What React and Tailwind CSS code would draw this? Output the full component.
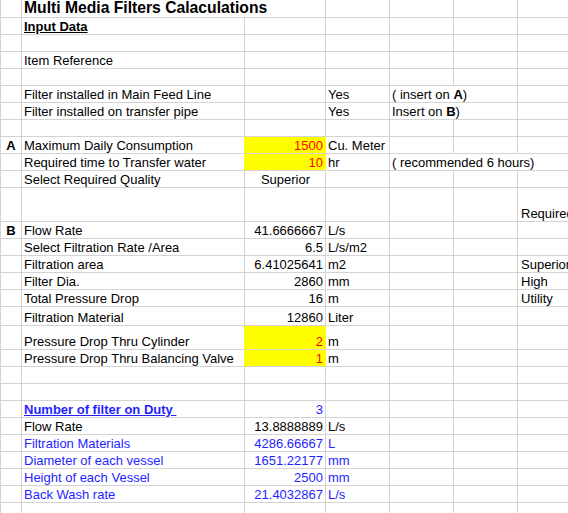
import React from "react";
import clsx from "clsx";

// column widths incl. right gridline
const A = "w-[21px]";
const B = "w-[223px]";
const C = "w-[81px]";
const D = "w-[64px]";
const E = "w-[64px]";
const BC = "w-[304px]";
const EF = "w-[128px]";
const EFG = "w-[192px]";

const Cell = ({ w, className, children, yellow }) => (
  <div
    className={clsx(
      "flex shrink-0 items-end whitespace-nowrap border-r border-b",
      yellow ? "bg-[#ffff00] border-r-[#ffff00] border-b-[#d4d4d4]" : "border-[#d4d4d4]",
      w,
      className
    )}
  >
    {children}
  </div>
);

const Row = ({ h, children }) => <div className={clsx("flex", h)}>{children}</div>;

const Label = ({ children, className }) => (
  <span className={clsx("pl-[2px]", className)}>{children}</span>
);

const Val = ({ children, className }) => (
  <span className={clsx("w-full pr-[2px] text-right", className)}>{children}</span>
);

// plain row: label, value, unit, and optional right-hand stuff
const DataRow = ({ tag, label, value, unit, g, labelCls, valCls, unitCls, yellow, h = "h-[17px]", yellowLeft }) => (
  <Row h={h}>
    <Cell w={A} className="justify-center font-bold">
      {tag}
    </Cell>
    <Cell w={B} className={yellowLeft ? "border-r-[#ffff00]" : ""}>
      <Label className={labelCls}>{label}</Label>
    </Cell>
    <Cell w={C} yellow={yellow}>
      <Val className={clsx(yellow && "text-[#ff0000]", valCls)}>{value}</Val>
    </Cell>
    <Cell w={D}>
      <Label className={clsx("pl-[2px]", unitCls)}>{unit}</Label>
    </Cell>
    <Cell w={E} />
    <Cell w={E} />
    <Cell w={E}>
      <Label className="pl-[3px]">{g}</Label>
    </Cell>
  </Row>
);

const Empty = ({ h = "h-[17px]", g }) => (
  <Row h={h}>
    <Cell w={A} />
    <Cell w={B} />
    <Cell w={C} />
    <Cell w={D} />
    <Cell w={E} />
    <Cell w={E} />
    <Cell w={E}>
      <Label className="pl-[3px]">{g}</Label>
    </Cell>
  </Row>
);

const blue = "text-[#1f1fff]";

export default function App() {
  return (
    <div className="h-[513px] w-[568px] overflow-hidden bg-white font-['Liberation_Sans',Arial,sans-serif] text-[13px] leading-[15px] text-black">
      <div className="border-l border-[#d4d4d4]">
        <Row h="h-[18px]">
          <Cell w={A} />
          <Cell w={BC}>
            <span className="pl-[2px] text-[15.7px] font-bold leading-[18px]">Multi Media Filters Calaculations</span>
          </Cell>
          <Cell w={D} />
          <Cell w={E} />
          <Cell w={E} />
          <Cell w={E} />
        </Row>
        <Row h="h-[17px]">
          <Cell w={A} />
          <Cell w={B}>
            <Label className="font-bold underline">Input Data</Label>
          </Cell>
          <Cell w={C} />
          <Cell w={D} />
          <Cell w={E} />
          <Cell w={E} />
          <Cell w={E} />
        </Row>
        <Empty />
        <DataRow label="Item Reference" />
        <Empty />
        <Row h="h-[17px]">
          <Cell w={A} />
          <Cell w={B}>
            <Label>Filter installed in Main Feed Line</Label>
          </Cell>
          <Cell w={C} />
          <Cell w={D}>
            <Label>Yes</Label>
          </Cell>
          <Cell w={EF}>
            <Label>
              ( insert on <b>A</b>)
            </Label>
          </Cell>
          <Cell w={E} />
        </Row>
        <Row h="h-[17px]">
          <Cell w={A} />
          <Cell w={B}>
            <Label>Filter installed on transfer pipe</Label>
          </Cell>
          <Cell w={C} />
          <Cell w={D}>
            <Label>Yes</Label>
          </Cell>
          <Cell w={EF}>
            <Label>
              Insert on <b>B</b>)
            </Label>
          </Cell>
          <Cell w={E} />
        </Row>
        <Empty />
        <DataRow tag="A" label="Maximum Daily Consumption" value="1500" unit="Cu. Meter" yellow yellowLeft />
        <Row h="h-[17px]">
          <Cell w={A} />
          <Cell w={B} className="border-r-[#ffff00]">
            <Label>Required time to Transfer water</Label>
          </Cell>
          <Cell w={C} yellow>
            <Val className="text-[#ff0000]">10</Val>
          </Cell>
          <Cell w={D}>
            <Label>hr</Label>
          </Cell>
          <Cell w={EFG}>
            <Label>( recommended 6 hours)</Label>
          </Cell>
        </Row>
        <Row h="h-[17px]">
          <Cell w={A} />
          <Cell w={B}>
            <Label>Select Required Quality</Label>
          </Cell>
          <Cell w={C} className="justify-center">
            <span className="pl-[1px]">Superior</span>
          </Cell>
          <Cell w={D} />
          <Cell w={E} />
          <Cell w={E} />
          <Cell w={E} />
        </Row>
        <Empty h="h-[34px]" g="Required Quality" />
        <DataRow tag="B" label="Flow Rate" value="41.6666667" unit="L/s" />
        <DataRow label="Select Filtration Rate /Area" value="6.5" unit="L/s/m2" />
        <DataRow label="Filtration area" value="6.41025641" unit="m2" g="Superior" />
        <DataRow label="Filter Dia." value="2860" unit="mm" g="High" />
        <DataRow label="Total Pressure Drop" value="16" unit="m" g="Utility" />
        <DataRow h="h-[19px]" label="Filtration Material" value="12860" unit="Liter" />
        <DataRow h="h-[24px]" label="Pressure Drop Thru Cylinder" value="2" unit="m" yellow yellowLeft />
        <DataRow label="Pressure Drop Thru Balancing Valve" value="1" unit="m" yellow yellowLeft />
        <Empty />
        <Empty />
        <DataRow
          label={"Number of filter on Duty\u00a0"}
          labelCls={clsx(blue, "font-bold underline")}
          value="3"
          valCls={blue}
        />
        <DataRow label="Flow Rate" value="13.8888889" unit="L/s" />
        <DataRow label="Filtration Materials" value="4286.66667" unit="L" labelCls={blue} valCls={blue} unitCls={blue} />
        <DataRow label="Diameter of each vessel" value="1651.22177" unit="mm" labelCls={blue} valCls={blue} unitCls={blue} />
        <DataRow label="Height of each Vessel" value="2500" unit="mm" labelCls={blue} valCls={blue} unitCls={blue} />
        <DataRow label="Back Wash rate" value="21.4032867" unit="L/s" labelCls={blue} valCls={blue} unitCls={blue} />
        <Empty />
      </div>
    </div>
  );
}
